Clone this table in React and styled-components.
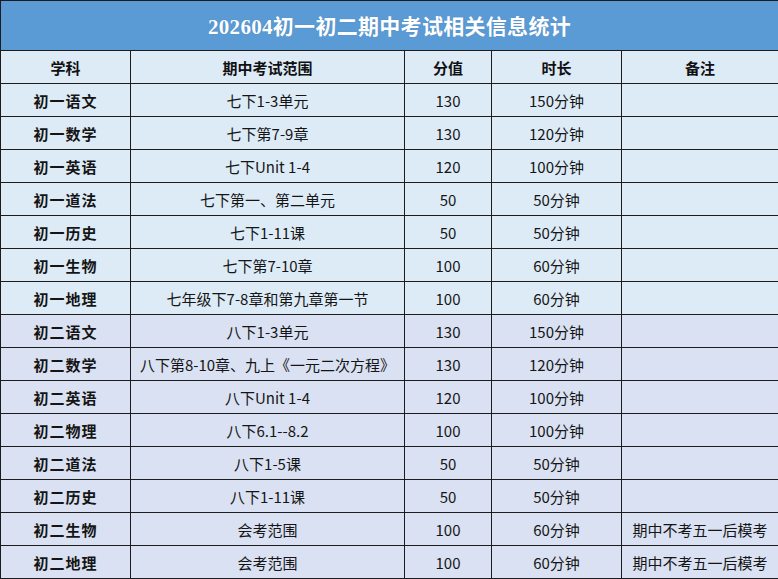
import React from "react";
import styled, { createGlobalStyle } from "styled-components";

const Global = createGlobalStyle`
  html, body { margin: 0; padding: 0; background: #ffffff; }
  body { font-family: "Noto Sans CJK SC", "Noto Sans", sans-serif; }
`;

const Table = styled.table`
  width: 778px;
  border-collapse: collapse;
  table-layout: fixed;
  border: 1px solid #1c1c1c;
`;

const Col = styled.col`
  width: ${(p) => p.$w}px;
`;

const TitleRow = styled.tr`
  height: 50px;
`;

const TitleCell = styled.th`
  background: #5b9bd5;
  color: #ffffff;
  font-family: "Liberation Serif", "Noto Sans CJK SC", serif;
  font-size: 21px;
  font-weight: 700;
  text-align: center;
  border: 1px solid #1c1c1c;
  padding: 0 0 2px;
  letter-spacing: 0.3px;
  text-shadow: 0 0 1px rgba(40, 80, 130, 0.4);
`;

const Row = styled.tr`
  height: 33px;
  background: ${(p) => (p.$second ? "#d9e1f2" : "#ddebf7")};
`;

const HeadCell = styled.th`
  border: 1px solid #1c1c1c;
  font-size: 15px;
  font-weight: 700;
  color: #111111;
  text-align: center;
  padding: 0;
`;

const Cell = styled.td`
  border: 1px solid #1c1c1c;
  font-size: 15px;
  font-weight: ${(p) => (p.$bold ? 700 : 400)};
  color: #151515;
  text-align: center;
  padding: 0;
  white-space: nowrap;
  overflow: hidden;
  letter-spacing: ${(p) => (p.$bold ? "1px" : "0")};
`;

const rows = [
  ["初一语文", "七下1-3单元", "130", "150分钟", ""],
  ["初一数学", "七下第7-9章", "130", "120分钟", ""],
  ["初一英语", "七下Unit 1-4", "120", "100分钟", ""],
  ["初一道法", "七下第一、第二单元", "50", "50分钟", ""],
  ["初一历史", "七下1-11课", "50", "50分钟", ""],
  ["初一生物", "七下第7-10章", "100", "60分钟", ""],
  ["初一地理", "七年级下7-8章和第九章第一节", "100", "60分钟", ""],
  ["初二语文", "八下1-3单元", "130", "150分钟", ""],
  ["初二数学", "八下第8-10章、九上《一元二次方程》", "130", "120分钟", ""],
  ["初二英语", "八下Unit 1-4", "120", "100分钟", ""],
  ["初二物理", "八下6.1--8.2", "100", "100分钟", ""],
  ["初二道法", "八下1-5课", "50", "50分钟", ""],
  ["初二历史", "八下1-11课", "50", "50分钟", ""],
  ["初二生物", "会考范围", "100", "60分钟", "期中不考五一后模考"],
  ["初二地理", "会考范围", "100", "60分钟", "期中不考五一后模考"],
];

export default function App() {
  return (
    <>
      <Global />
      <Table>
        <colgroup>
          <Col $w={130} />
          <Col $w={274} />
          <Col $w={87} />
          <Col $w={130} />
          <Col $w={157} />
        </colgroup>
        <tbody>
          <TitleRow>
            <TitleCell colSpan={5}>202604初一初二期中考试相关信息统计</TitleCell>
          </TitleRow>
          <Row>
            <HeadCell>学科</HeadCell>
            <HeadCell>期中考试范围</HeadCell>
            <HeadCell>分值</HeadCell>
            <HeadCell>时长</HeadCell>
            <HeadCell>备注</HeadCell>
          </Row>
          {rows.map((r, i) => (
            <Row key={r[0]} $second={i >= 7}>
              <Cell $bold>{r[0]}</Cell>
              <Cell>{r[1]}</Cell>
              <Cell>{r[2]}</Cell>
              <Cell>{r[3]}</Cell>
              <Cell>{r[4]}</Cell>
            </Row>
          ))}
        </tbody>
      </Table>
    </>
  );
}
